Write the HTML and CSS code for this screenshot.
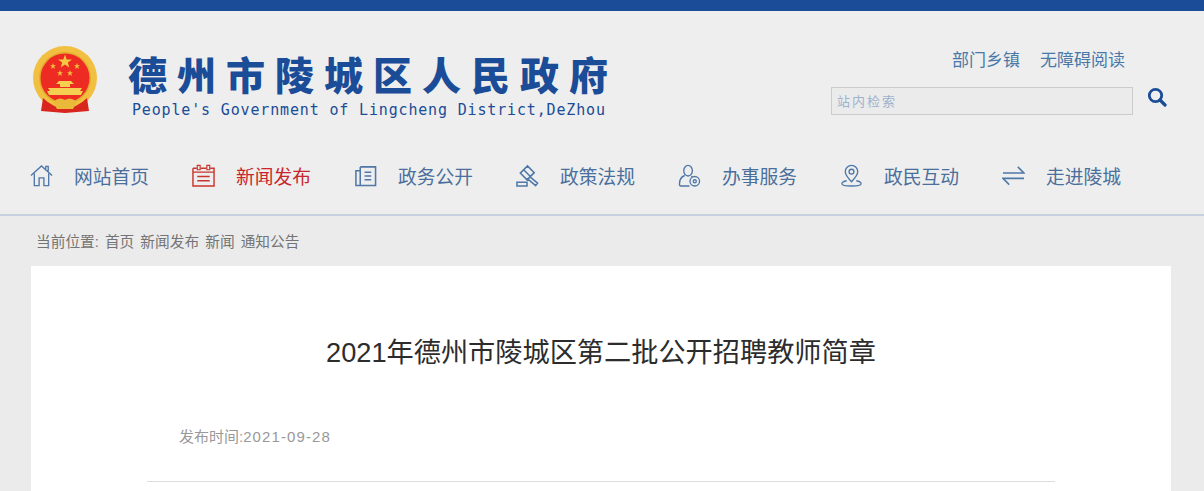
FILE: index.html
```html
<!DOCTYPE html>
<html lang="zh-CN">
<head>
  <meta charset="UTF-8">
  <meta name="viewport" content="width=device-width, initial-scale=1.0">
  <title>2021年德州市陵城区第二批公开招聘教师简章</title>
  <link rel="stylesheet" href="styles.css">
</head>
<body>
  <div class="top-bar"></div>
  <header class="header">
    <div class="brand-row">
      <div class="brand">
        <svg class="emblem" width="64" height="68" viewBox="0 0 64 68">
          <circle cx="32" cy="32" r="32" fill="#f2c040"/>
          <circle cx="32" cy="32" r="26" fill="#e3aa2e"/>
          <circle cx="32" cy="32" r="24.5" fill="#ee2b22"/>
          <polygon points="32,8.5 33.7,13.4 39,13.4 34.8,16.6 36.3,21.5 32,18.6 27.7,21.5 29.2,16.6 25,13.4 30.3,13.4" fill="#f5c842"/>
          <polygon points="20,17 20.8,19.2 23,19.2 21.2,20.6 22,23 20,21.6 18,23 18.8,20.6 17,19.2 19.2,19.2" fill="#f0bf3c"/>
          <polygon points="44,17 44.8,19.2 47,19.2 45.2,20.6 46,23 44,21.6 42,23 42.8,20.6 41,19.2 43.2,19.2" fill="#f0bf3c"/>
          <polygon points="27,24 27.8,26.2 30,26.2 28.2,27.6 29,30 27,28.6 25,30 25.8,27.6 24,26.2 26.2,26.2" fill="#f0bf3c"/>
          <polygon points="37,24 37.8,26.2 40,26.2 38.2,27.6 39,30 37,28.6 35,30 35.8,27.6 34,26.2 36.2,26.2" fill="#f0bf3c"/>
          <path d="M26 35 H38 L41 38 H37 V41 H27 V38 H23 Z" fill="#f5d050"/>
          <path d="M15 42 H49 L47 45 H50 L48 49 H16 L14 45 H17 Z" fill="#f5cf52"/>
          <path d="M10 52 L8 65 L20 66 L32 67 L44 66 L56 65 L54 52 Q44 62 32 62 Q20 62 10 52 Z" fill="#d8261f"/>
          <path d="M20 56 Q26 50 32 54 Q38 50 44 56 L40 63 H24 Z" fill="#eab93a"/>
        </svg>
        <div class="brand-text">
          <div class="brand-name">德州市陵城区人民政府</div>
          <div class="brand-en">People's Government of Lingcheng District,DeZhou</div>
        </div>
      </div>
      <div class="tools">
        <div class="tool-links">
          <a href="#">部门乡镇</a>
          <a href="#">无障碍阅读</a>
        </div>
        <form class="search">
          <input class="search-input" type="text" placeholder="站内检索">
          <button class="search-btn" type="button" aria-label="搜索">
            <svg width="20" height="20" viewBox="0 0 20 20"><circle cx="8.5" cy="8.5" r="6.2" fill="none" stroke="#1b4c97" stroke-width="2.8"/><path d="M13 13 L18 18" stroke="#1b4c97" stroke-width="3.2" stroke-linecap="round"/></svg>
          </button>
        </form>
      </div>
    </div>
    <nav class="nav">
      <a class="nav-item" href="#">
        <svg class="nav-icon" viewBox="0 0 24 24"><path d="M1 12 L12 2 L23 12 M4.5 10 V22.5 H9.5 V14.5 H14.5 V22.5 H19.5 V10 M16.5 5 V2.5 H19 V7.5"/></svg>
        <span>网站首页</span>
      </a>
      <a class="nav-item active" href="#">
        <svg class="nav-icon cal-icon" viewBox="0 0 24 24"><path d="M1 4.5 H5 M9 4.5 H15 M19 4.5 H23 V23 H1 V4.5 M1 8.5 H23 M5.5 13 H18.5 M5.5 17.5 H18.5" stroke-width="1.5"/><path d="M5.5 1.5 H8.5 V6 H5.5 Z M15.5 1.5 H18.5 V6 H15.5 Z" stroke-width="1.2"/></svg>
        <span>新闻发布</span>
      </a>
      <a class="nav-item" href="#">
        <svg class="nav-icon" viewBox="0 0 24 24"><path d="M6.5 3 H22.5 V22.5 H2 V7 H6.5 M6.5 3 V22.5 M11 8.5 H18 M11 12.5 H18 M11 16.5 H18" stroke-width="1.6"/></svg>
        <span>政务公开</span>
      </a>
      <a class="nav-item" href="#">
        <svg class="nav-icon" viewBox="0 0 24 24"><path d="M4.5 9.5 L12 2 L19 9 L11.5 16.5 Z M8 6 L15 13 M14 13 L22.5 20 L20.5 22.5 L11.5 15 M1 19 H11.5 V23 H1 Z" stroke-width="1.6"/></svg>
        <span>政策法规</span>
      </a>
      <a class="nav-item" href="#">
        <svg class="nav-icon" viewBox="0 0 24 24"><path d="M6 7 A4.5 5.5 0 1 1 15 7 A4.5 5.5 0 1 1 6 7 M7 12 Q1.5 14 1.5 21 Q1.5 23 4 23 H12 M14 12.5 L15 13.5"/><circle cx="17.5" cy="18" r="5"/><circle cx="17.5" cy="18" r="1.6"/></svg>
        <span>办事服务</span>
      </a>
      <a class="nav-item" href="#">
        <svg class="nav-icon" viewBox="0 0 24 24"><path d="M12 18.5 Q5.5 11.5 5.5 8 A6.5 6.5 0 1 1 18.5 8 Q18.5 11.5 12 18.5 Z M7 17.5 Q2 18.5 2 20.5 Q2 23 12 23 Q22 23 22 20.5 Q22 18.5 17 17.5"/><circle cx="12" cy="8" r="2.5"/></svg>
        <span>政民互动</span>
      </a>
      <a class="nav-item" href="#">
        <svg class="nav-icon" viewBox="0 0 24 24"><path d="M1 9.5 H23 L16.5 3 M23 15 H1 L7.5 21.5" stroke-width="1.6"/></svg>
        <span>走进陵城</span>
      </a>
    </nav>
  </header>
  <div class="crumbs">当前位置: 首页 新闻发布 新闻 通知公告</div>
  <main class="article">
    <h1 class="article-title">2021年德州市陵城区第二批公开招聘教师简章</h1>
    <div class="article-meta">发布时间:<span class="article-date">2021-09-28</span></div>
  </main>
</body>
</html>
```
FILE: styles.css
```css
* {
  box-sizing: border-box;
}
html, body {
  height: 100%;
}
body {
  margin: 0;
  background-color: #ebebeb;
  font-family: "Liberation Sans", "Noto Sans CJK SC", sans-serif;
  overflow: hidden;
}
a {
  text-decoration: none;
  color: inherit;
}

.top-bar {
  height: 11px;
  background-color: #1b4c97;
}
.header {
  height: 205px;
  background-color: #eeeeee;
  border-bottom: 2px solid #c5d0e0;
}

.brand-row {
  display: flex;
  justify-content: space-between;
  height: 146px;
  padding: 35px 37px 0 33px;
}
.brand {
  display: flex;
  align-items: flex-start;
}
.emblem {
  margin-right: 31px;
}
.brand-text {
  padding-top: 5px;
}
.brand-name {
  font-family: "Noto Sans CJK SC", sans-serif;
  font-size: 39px;
  font-weight: 900;
  line-height: 44px;
  letter-spacing: 10px;
  color: #1b4c97;
  white-space: nowrap;
}
.brand-en {
  margin: 5px 0 0 4px;
  font-family: "DejaVu Sans Mono", monospace;
  font-size: 15px;
  line-height: 20px;
  letter-spacing: 0.84px;
  color: #1b4c97;
  white-space: nowrap;
}

.tools {
  display: flex;
  flex-direction: column;
  align-items: flex-end;
}
.tool-links {
  display: flex;
  gap: 20px;
  margin: 5px 42px 0 0;
  font-size: 17px;
  line-height: 20px;
  color: #4a78a8;
}
.search {
  display: flex;
  align-items: flex-start;
  margin-top: 16px;
}
.search-input {
  width: 302px;
  height: 28px;
  padding: 0 5px;
  border: 1px solid #cccccc;
  background-color: #ebebeb;
  font-family: inherit;
  font-size: 13px;
  letter-spacing: 2px;
  outline: none;
}
.search-input::placeholder {
  color: #9db2cf;
  opacity: 1;
}
.search-btn {
  display: flex;
  margin-left: 14px;
  padding: 0;
  border: none;
  background: none;
}

.nav {
  display: flex;
  padding-left: 30px;
}
.nav-item {
  display: flex;
  align-items: center;
  width: 162px;
  height: 36px;
  font-size: 18.75px;
  color: #4a6f9c;
}
.nav-item.active {
  color: #c9252c;
}
.nav-icon {
  flex: none;
  width: 23px;
  height: 23px;
  margin-right: 21px;
  fill: none;
  stroke: #4f77a8;
  stroke-width: 1.4;
}
.active .nav-icon {
  stroke: #c9352c;
}

.crumbs {
  height: 50px;
  padding: 16px 0 0 36px;
  font-size: 14.7px;
  line-height: 20px;
  word-spacing: 2px;
  color: #747474;
}

.article {
  height: 225px;
  margin: 0 33px 0 31px;
  padding: 0 116px;
  background-color: #ffffff;
}
.article-title {
  margin: 0;
  padding-top: 67px;
  font-size: 27.2px;
  font-weight: normal;
  line-height: 40px;
  text-align: center;
  color: #2c2c2c;
}
.article-meta {
  height: 109px;
  padding: 54px 0 0 32px;
  border-bottom: 1px solid #dddddd;
  font-size: 15px;
  line-height: 20px;
  color: #999999;
}
.article-date {
  letter-spacing: 1.1px;
}
```
